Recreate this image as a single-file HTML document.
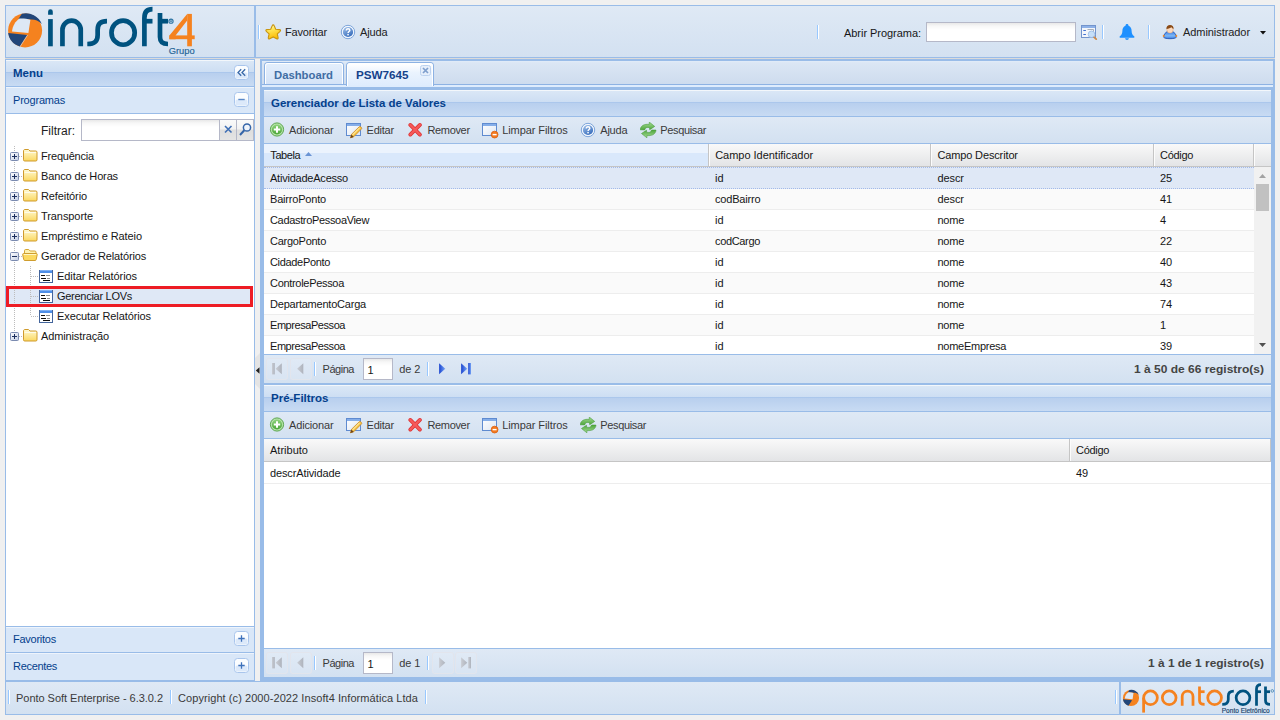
<!DOCTYPE html>
<html><head><meta charset="utf-8"><title>Ponto Soft Enterprise</title>
<style>
html,body{margin:0;padding:0}
body{width:1280px;height:720px;overflow:hidden;background:#f0f0f0;position:relative;font-family:"Liberation Sans",sans-serif;font-size:11px;line-height:11px;color:#161616}
div,span,svg{position:absolute;box-sizing:border-box}
.t{white-space:pre;font-size:11px;line-height:11px}
.h{white-space:pre;font-weight:bold;color:#04408c}
.a{white-space:pre;color:#04408c}
.g{white-space:pre;color:#3a3a3a}

</style></head>
<body>
<div style="left:5px;top:58px;width:1270px;height:1px;background:#dadada"></div>
<div style="left:5px;top:5px;width:250px;height:53px;border:1px solid #99bce8;background:linear-gradient(#dfe9f5,#d3e1f1)"></div>
<div style="left:255px;top:5px;width:1020px;height:53px;border:1px solid #99bce8;background:linear-gradient(#dfe9f5,#d3e1f1)"></div>
<svg style="left:5px;top:5px" width="250" height="53" viewBox="0 0 250 53">
<circle cx="20.100" cy="25.400" r="17" fill="#f5821f"/>
<path d="M13.300 14.600C14.500 12.300 15.600 10.500 16.900 8.700A17.200 17.200 0 0 1 36.900 19C33.500 15.600 29.500 14.300 25.400 14.600 21 13.600 16.500 13.900 13.300 14.600z" fill="#21467a"/>
<path d="M7 26.600C7.600 21 10.300 16.300 14.600 13.600 18 13.300 22 13.800 25.400 14.800L23.400 28.100z" fill="#dde8f5"/>
<path d="M3.200 28.100L22.300 30.100 14.800 41.500C8.500 39.800 4 34.800 3.200 28.100z" fill="#21467a"/>
<path d="M22.600 30L15.100 41.600" stroke="#dde8f5" stroke-width=".6" fill="none"/>
<g fill="none" stroke="#00527f" stroke-width="4.700">
<path d="M45.450 14.100V41.300"/>
<path d="M57.450 41.300V24.800a9.150 9.150 0 0 1 18.300 0V41.300"/>
<path d="M82.300 39C90 39 92.650 36 92.650 30V25C92.650 19 95.500 16.200 102 16.200"/>
<ellipse cx="118.100" cy="27.650" rx="11.600" ry="12.100"/>
<path d="M139.400 41.300V13C139.400 7 142 4.200 147.500 4.200"/>
<path d="M139.400 16.200H147.500"/>
<path d="M155 8V32C155 37 157.500 39 163 39"/>
<path d="M155 16.200H163"/>
</g>
<path d="M43.100 9.800V6.650a2.350 2.350 0 0 1 4.700 0V9.800z" fill="#00527f"/>
<circle cx="166" cy="16.200" r="2.100" fill="#cfe0ef" stroke="#2e74a3" stroke-width="1.100"/><rect x="165.300" y="15.300" width="1.400" height="1.800" fill="#2e74a3"/>
<path d="M182.200 8.900H186.900V41.300H182.200z" fill="#f5821f"/>
<path d="M182.200 8.900V15.600L170.600 30.400V34.200H164.400V30.600z" fill="#f5821f"/>
<path d="M164.400 30.400H189.700V34.200H164.400z" fill="#f5821f"/>
<text x="163.700" y="48.900" font-family="Liberation Sans" font-size="9.300" fill="#1f6496" stroke="#1f6496" stroke-width=".15" textLength="26" lengthAdjust="spacingAndGlyphs">Grupo</text>
</svg>
<div style="left:258px;top:25px;width:1px;height:14px;background:#98c8ff"></div>
<div style="left:259px;top:25px;width:1px;height:14px;background:#fff"></div>
<svg style="left:265px;top:24px" width="17" height="17" viewBox="0 0 17 17"><defs><linearGradient id="sg2" x1="0" y1="0" x2=".3" y2="1"><stop offset="0" stop-color="#fffde0"/><stop offset=".4" stop-color="#ffe85a"/><stop offset="1" stop-color="#fbbd08"/></linearGradient></defs><path d="M8.200 .9c.5 0 .8.300 1 .8l1.500 3.500 3.800.4c1.100.1 1.400 1 .6 1.700l-2.800 2.600.8 3.800c.2 1-.5 1.600-1.400 1.100L8.200 12.900l-3.500 1.900c-.9.500-1.600-.1-1.400-1.100l.8-3.800L1.300 7.300C.5 6.600.8 5.700 1.900 5.600l3.800-.4L7.200 1.700c.2-.5.500-.8 1-.8z" fill="url(#sg2)" stroke="#c9950f" stroke-width="1.100" stroke-linejoin="round"/></svg>
<span class="g" style="left:285px;top:27px;letter-spacing:-0.156px;color:#222">Favoritar</span>
<svg style="left:340px;top:24px" width="16" height="16" viewBox="0 0 16 16"><defs><linearGradient id="hg3" x1="0" y1="0" x2=".6" y2="1"><stop offset="0" stop-color="#a5c5ec"/><stop offset="1" stop-color="#3a6fbd"/></linearGradient></defs><circle cx="8" cy="8" r="6.700" fill="#f4f8fd" stroke="#5f90d2" stroke-width=".8"/><circle cx="8" cy="8" r="5.100" fill="url(#hg3)"/><path d="M6.300 6.500c0-1.100.7-1.800 1.800-1.800 1 0 1.700.6 1.700 1.500 0 1.300-1.700 1.300-1.700 2.700" fill="none" stroke="#fff" stroke-width="1.500"/><rect x="7.300" y="9.900" width="1.500" height="1.500" fill="#fff"/></svg>
<span class="g" style="left:360px;top:27px;letter-spacing:-0.128px;color:#222">Ajuda</span>
<div style="left:817px;top:25px;width:1px;height:14px;background:#98c8ff"></div>
<div style="left:818px;top:25px;width:1px;height:14px;background:#fff"></div>
<span class="t" style="left:844px;top:28px;letter-spacing:-0.043px">Abrir Programa:</span>
<div style="left:926px;top:22px;width:150px;height:20px;border:1px solid #b5b8c8;background:#fff linear-gradient(#e8e8e8 0,#f7f7f7 3px,#fff 7px)"></div>
<svg style="left:1081px;top:24px" width="17" height="17" viewBox="0 0 17 17"><rect x=".500" y="1.500" width="14" height="12" fill="#f3f6fb" stroke="#7394cc"/><rect x="1" y="2" width="13" height="2" fill="#8db1e8"/><path d="M2.300 6.500h2.600M2.300 10.500h2.600" stroke="#3f6fd0" stroke-width="1.200"/><path d="M6.500 5.500h6v6" fill="none" stroke="#a9afb8" stroke-width="1"/><circle cx="10.500" cy="10.300" r="3.300" fill="#c6dff8" stroke="#9dbde6" stroke-width=".9"/><path d="M13.300 13.300l1.900 1.800" stroke="#cf8a45" stroke-width="1.800" stroke-linecap="round"/></svg>
<div style="left:1102px;top:25px;width:1px;height:14px;background:#98c8ff"></div>
<div style="left:1103px;top:25px;width:1px;height:14px;background:#fff"></div>
<svg style="left:1119px;top:24px" width="16" height="16" viewBox="0 0 16 16"><path d="M8 0c.9 0 1.500.6 1.500 1.500v.3c2.100.8 3.100 2.700 3.100 5 0 2.800.9 4.200 2.300 5.300.5.400.6.700.5 1.100-.1.400-.4.600-1 .6H1.600c-.6 0-.9-.2-1-.6-.1-.4 0-.7.500-1.100C2.500 11 3.400 9.600 3.400 6.800c0-2.300 1-4.200 3.100-5v-.3C6.500.6 7.100 0 8 0z" fill="#1e90ff"/><path d="M6.100 14.300h3.800c-.1 1-.9 1.700-1.900 1.700s-1.800-.7-1.900-1.700z" fill="#1e90ff"/></svg>
<div style="left:1148px;top:25px;width:1px;height:14px;background:#98c8ff"></div>
<div style="left:1149px;top:25px;width:1px;height:14px;background:#fff"></div>
<svg style="left:1162px;top:24px" width="16" height="16" viewBox="0 0 16 16"><defs><linearGradient id="ug6" x1="0" y1="0" x2="0" y2="1"><stop offset="0" stop-color="#3f7fe0"/><stop offset=".6" stop-color="#7db8f8"/><stop offset="1" stop-color="#3b7bdc"/></linearGradient></defs><path d="M1.600 13.200C2 9.800 4 8 5.600 7.600h4.800c1.600.4 3.600 2.200 4 5.600-.9 1-3.200 1.500-6.400 1.500s-5.500-.5-6.400-1.500z" fill="url(#ug6)" stroke="#1f4fb0" stroke-width=".8"/><rect x=".800" y="10.700" width="1.700" height="2.300" rx=".8" fill="#ef8a2a"/><rect x="13.500" y="10.700" width="1.700" height="2.300" rx=".8" fill="#ef8a2a"/><ellipse cx="8" cy="5.400" rx="3.200" ry="3.700" fill="#fbd9bd" stroke="#d8a078" stroke-width=".5"/><path d="M4.400 4.900C4.300 2.300 5.900.9 8 .9s3.800 1.300 3.600 4c-1-.3-1.700-.9-2.100-1.700-1.100.9-2.900 1.500-5.100 1.700z" fill="#8a4a17"/></svg>
<span class="g" style="left:1183px;top:27px;letter-spacing:-0.066px;color:#222">Administrador</span>
<svg style="left:1260px;top:31px" width="6" height="4" viewBox="0 0 6 4"><path d="M0 0h6L3 3.500z" fill="#111"/></svg>
<div style="left:5px;top:59px;width:250px;height:622px;border:1px solid #99bce8;background:#fff"></div>
<div style="left:6px;top:60px;width:248px;height:26px;background:linear-gradient(#f3f7fb 0,#f3f7fb 1px,#dae7f6 1px,#cddef3 12px,#abc7ec 12px,#abc7ec 13px,#b8cfee 13px,#c8dbf3 100%)"></div>
<div style="left:6px;top:86px;width:248px;height:1px;background:#99bce8"></div>
<span class="h" style="left:13px;top:68px;transform:scaleX(1.044);transform-origin:0 0;font-weight:bold">Menu</span>
<svg style="left:234px;top:65px" width="15" height="15" viewBox="0 0 15 15"><rect x=".500" y=".500" width="14" height="14" rx="3" fill="#fbfdff" stroke="#a9c5ec"/><rect x="1.500" y="7.500" width="12" height="6" rx="1.500" fill="#dce9fa"/><path d="M7.200 4.200L4 7.500 7.200 10.800M11.200 4.200L8 7.500l3.200 3.300" fill="none" stroke="#3a69a8" stroke-width="1.300"/></svg>
<div style="left:6px;top:87px;width:248px;height:26px;background:#d9e7f8;border-top:1px solid #eef4fc"></div>
<div style="left:6px;top:113px;width:248px;height:1px;background:#99bce8"></div>
<span class="a" style="left:13px;top:95px;letter-spacing:-0.2px">Programas</span>
<svg style="left:234px;top:92px" width="15" height="15" viewBox="0 0 15 15"><rect x=".500" y=".500" width="14" height="14" rx="3" fill="#fbfdff" stroke="#a9c5ec"/><rect x="1.500" y="7.500" width="12" height="6" rx="1.500" fill="#dce9fa"/><path d="M4.300 7.500h6.400" stroke="#5a88c8" stroke-width="1.400"/></svg>
<span class="t" style="left:41px;top:125px;color:#222;font-size:12px;line-height:12px">Filtrar:</span>
<div style="left:81px;top:119px;width:139px;height:22px;border:1px solid #b5b8c8;background:#fff linear-gradient(#e8e8e8 0,#f7f7f7 3px,#fff 7px)"></div>
<div style="left:220px;top:119px;width:17px;height:22px;border:1px solid #b5b8c8;border-left:0;background:linear-gradient(#fafafa 0,#f2f2f2 45%,#dedede 50%,#e4e4e4)"></div>
<div style="left:237px;top:119px;width:17px;height:22px;border:1px solid #b5b8c8;border-left:0;background:linear-gradient(#fafafa 0,#f2f2f2 45%,#dedede 50%,#e4e4e4)"></div>
<svg style="left:224px;top:125px" width="9" height="9" viewBox="0 0 9 9"><path d="M1 1l6.500 6.500M7.500 1L1 7.500" stroke="#3f6fb5" stroke-width="1.600"/></svg>
<svg style="left:238px;top:122px" width="15" height="15" viewBox="0 0 15 15"><circle cx="9" cy="5.500" r="3.600" fill="#eef4fc" stroke="#3565a8" stroke-width="1.500"/><path d="M6.300 8.300L2 13" stroke="#3565a8" stroke-width="2"/></svg>
<div style="left:6px;top:286px;width:247px;height:21px;background:#dfe8f6"></div>
<div style="left:14px;top:146px;width:1px;height:190px;background:repeating-linear-gradient(#bcbcbc 0 1px,transparent 1px 2px)"></div>
<div style="left:30px;top:266px;width:1px;height:50px;background:repeating-linear-gradient(#bcbcbc 0 1px,transparent 1px 2px)"></div>
<svg style="left:10px;top:152px" width="9" height="9" viewBox="0 0 9 9"><defs><linearGradient id="pg12" x1="0" y1="0" x2="1" y2="1"><stop offset="0" stop-color="#fff"/><stop offset="1" stop-color="#c3cde2"/></linearGradient></defs><rect x=".500" y=".500" width="8" height="8" rx="1" fill="url(#pg12)" stroke="#7b8bb0"/><path d="M2 4.500h5" stroke="#1c2f5c" stroke-width="1"/><path d="M4.500 2v5" stroke="#1c2f5c" stroke-width="1"/></svg>
<div style="left:19px;top:156px;width:3px;height:1px;background:repeating-linear-gradient(90deg,#bcbcbc 0 1px,transparent 1px 2px)"></div>
<svg style="left:22px;top:147px" width="16" height="16" viewBox="0 0 16 16"><defs><linearGradient id="fg13" x1="0" y1="0" x2="0" y2="1"><stop offset="0" stop-color="#fffbd6"/><stop offset="1" stop-color="#fbd860"/></linearGradient></defs><path d="M1.500 4c0-1 .5-1.500 1.500-1.500h3.500l1.500 1.500h5.800c.8 0 1.200.4 1.200 1.200v7.600c0 .8-.4 1.200-1.200 1.200H2.700c-.8 0-1.200-.4-1.200-1.200z" fill="url(#fg13)" stroke="#cf9a2c" stroke-width="1"/><path d="M2.500 5.500h11.500" stroke="#fff" stroke-width="1" opacity=".7"/></svg>
<span class="t" style="left:41px;top:151px;letter-spacing:-0.205px">Frequência</span>
<svg style="left:10px;top:172px" width="9" height="9" viewBox="0 0 9 9"><defs><linearGradient id="pg14" x1="0" y1="0" x2="1" y2="1"><stop offset="0" stop-color="#fff"/><stop offset="1" stop-color="#c3cde2"/></linearGradient></defs><rect x=".500" y=".500" width="8" height="8" rx="1" fill="url(#pg14)" stroke="#7b8bb0"/><path d="M2 4.500h5" stroke="#1c2f5c" stroke-width="1"/><path d="M4.500 2v5" stroke="#1c2f5c" stroke-width="1"/></svg>
<div style="left:19px;top:176px;width:3px;height:1px;background:repeating-linear-gradient(90deg,#bcbcbc 0 1px,transparent 1px 2px)"></div>
<svg style="left:22px;top:167px" width="16" height="16" viewBox="0 0 16 16"><defs><linearGradient id="fg15" x1="0" y1="0" x2="0" y2="1"><stop offset="0" stop-color="#fffbd6"/><stop offset="1" stop-color="#fbd860"/></linearGradient></defs><path d="M1.500 4c0-1 .5-1.500 1.500-1.500h3.500l1.500 1.500h5.800c.8 0 1.200.4 1.200 1.200v7.600c0 .8-.4 1.200-1.200 1.200H2.700c-.8 0-1.200-.4-1.200-1.200z" fill="url(#fg15)" stroke="#cf9a2c" stroke-width="1"/><path d="M2.500 5.500h11.500" stroke="#fff" stroke-width="1" opacity=".7"/></svg>
<span class="t" style="left:41px;top:171px;letter-spacing:-0.135px">Banco de Horas</span>
<svg style="left:10px;top:192px" width="9" height="9" viewBox="0 0 9 9"><defs><linearGradient id="pg16" x1="0" y1="0" x2="1" y2="1"><stop offset="0" stop-color="#fff"/><stop offset="1" stop-color="#c3cde2"/></linearGradient></defs><rect x=".500" y=".500" width="8" height="8" rx="1" fill="url(#pg16)" stroke="#7b8bb0"/><path d="M2 4.500h5" stroke="#1c2f5c" stroke-width="1"/><path d="M4.500 2v5" stroke="#1c2f5c" stroke-width="1"/></svg>
<div style="left:19px;top:196px;width:3px;height:1px;background:repeating-linear-gradient(90deg,#bcbcbc 0 1px,transparent 1px 2px)"></div>
<svg style="left:22px;top:187px" width="16" height="16" viewBox="0 0 16 16"><defs><linearGradient id="fg17" x1="0" y1="0" x2="0" y2="1"><stop offset="0" stop-color="#fffbd6"/><stop offset="1" stop-color="#fbd860"/></linearGradient></defs><path d="M1.500 4c0-1 .5-1.500 1.500-1.500h3.500l1.500 1.500h5.800c.8 0 1.200.4 1.200 1.200v7.600c0 .8-.4 1.200-1.200 1.200H2.700c-.8 0-1.200-.4-1.200-1.200z" fill="url(#fg17)" stroke="#cf9a2c" stroke-width="1"/><path d="M2.500 5.500h11.500" stroke="#fff" stroke-width="1" opacity=".7"/></svg>
<span class="t" style="left:41px;top:191px;letter-spacing:-0.108px">Refeitório</span>
<svg style="left:10px;top:212px" width="9" height="9" viewBox="0 0 9 9"><defs><linearGradient id="pg18" x1="0" y1="0" x2="1" y2="1"><stop offset="0" stop-color="#fff"/><stop offset="1" stop-color="#c3cde2"/></linearGradient></defs><rect x=".500" y=".500" width="8" height="8" rx="1" fill="url(#pg18)" stroke="#7b8bb0"/><path d="M2 4.500h5" stroke="#1c2f5c" stroke-width="1"/><path d="M4.500 2v5" stroke="#1c2f5c" stroke-width="1"/></svg>
<div style="left:19px;top:216px;width:3px;height:1px;background:repeating-linear-gradient(90deg,#bcbcbc 0 1px,transparent 1px 2px)"></div>
<svg style="left:22px;top:207px" width="16" height="16" viewBox="0 0 16 16"><defs><linearGradient id="fg19" x1="0" y1="0" x2="0" y2="1"><stop offset="0" stop-color="#fffbd6"/><stop offset="1" stop-color="#fbd860"/></linearGradient></defs><path d="M1.500 4c0-1 .5-1.500 1.500-1.500h3.500l1.500 1.500h5.800c.8 0 1.200.4 1.200 1.200v7.600c0 .8-.4 1.200-1.200 1.200H2.700c-.8 0-1.200-.4-1.200-1.200z" fill="url(#fg19)" stroke="#cf9a2c" stroke-width="1"/><path d="M2.500 5.500h11.500" stroke="#fff" stroke-width="1" opacity=".7"/></svg>
<span class="t" style="left:41px;top:211px;letter-spacing:-0.08px">Transporte</span>
<svg style="left:10px;top:232px" width="9" height="9" viewBox="0 0 9 9"><defs><linearGradient id="pg20" x1="0" y1="0" x2="1" y2="1"><stop offset="0" stop-color="#fff"/><stop offset="1" stop-color="#c3cde2"/></linearGradient></defs><rect x=".500" y=".500" width="8" height="8" rx="1" fill="url(#pg20)" stroke="#7b8bb0"/><path d="M2 4.500h5" stroke="#1c2f5c" stroke-width="1"/><path d="M4.500 2v5" stroke="#1c2f5c" stroke-width="1"/></svg>
<div style="left:19px;top:236px;width:3px;height:1px;background:repeating-linear-gradient(90deg,#bcbcbc 0 1px,transparent 1px 2px)"></div>
<svg style="left:22px;top:227px" width="16" height="16" viewBox="0 0 16 16"><defs><linearGradient id="fg21" x1="0" y1="0" x2="0" y2="1"><stop offset="0" stop-color="#fffbd6"/><stop offset="1" stop-color="#fbd860"/></linearGradient></defs><path d="M1.500 4c0-1 .5-1.500 1.500-1.500h3.500l1.500 1.500h5.800c.8 0 1.200.4 1.200 1.200v7.600c0 .8-.4 1.200-1.200 1.200H2.700c-.8 0-1.200-.4-1.200-1.200z" fill="url(#fg21)" stroke="#cf9a2c" stroke-width="1"/><path d="M2.500 5.500h11.500" stroke="#fff" stroke-width="1" opacity=".7"/></svg>
<span class="t" style="left:41px;top:231px;letter-spacing:-0.09px">Empréstimo e Rateio</span>
<svg style="left:10px;top:252px" width="9" height="9" viewBox="0 0 9 9"><defs><linearGradient id="pg22" x1="0" y1="0" x2="1" y2="1"><stop offset="0" stop-color="#fff"/><stop offset="1" stop-color="#c3cde2"/></linearGradient></defs><rect x=".500" y=".500" width="8" height="8" rx="1" fill="url(#pg22)" stroke="#7b8bb0"/><path d="M2 4.500h5" stroke="#1c2f5c" stroke-width="1"/></svg>
<div style="left:19px;top:256px;width:3px;height:1px;background:repeating-linear-gradient(90deg,#bcbcbc 0 1px,transparent 1px 2px)"></div>
<svg style="left:22px;top:248px" width="16" height="16" viewBox="0 0 16 16"><path d="M2.500 11V2.700c0-.8.400-1.200 1.200-1.200h3L8.200 3h4.600c.8 0 1.200.4 1.200 1.200V6" fill="#fdf2b0" stroke="#d6a432"/><path d="M.700 6.700c-.2-.8.200-1.200.9-1.200h12.700c.7 0 1.100.4.900 1.200l-1 4.800c-.1.700-.5 1-1.200 1H2.900c-.7 0-1.100-.3-1.200-1z" fill="#fbd960" stroke="#cf9d2e"/><path d="M1.800 6.500h12.400" stroke="#fff6c4" stroke-width="1"/></svg>
<span class="t" style="left:41px;top:251px;letter-spacing:-0.154px">Gerador de Relatórios</span>
<div style="left:31px;top:276px;width:7px;height:1px;background:repeating-linear-gradient(90deg,#bcbcbc 0 1px,transparent 1px 2px)"></div>
<svg style="left:38px;top:268px" width="16" height="16" viewBox="0 0 16 16"><rect x="1.500" y="2.500" width="13" height="12" fill="#fff" stroke="#44659c"/><rect x="2" y="3" width="12" height="2" fill="#4f8fe8"/><rect x="2" y="2" width="12" height="1" fill="#7fb0f2"/><path d="M3 7.500h4M3 10.500h5M5 12.500h7" stroke="#111" stroke-width="1"/><path d="M8 7.500h4M9 10.500h3" stroke="#8a8a8a" stroke-width="1"/></svg>
<span class="t" style="left:57px;top:271px;letter-spacing:-0.078px">Editar Relatórios</span>
<div style="left:6px;top:286px;width:247px;height:21px;border:3px solid #ed1c24"></div>
<div style="left:31px;top:296px;width:7px;height:1px;background:repeating-linear-gradient(90deg,#bcbcbc 0 1px,transparent 1px 2px)"></div>
<svg style="left:38px;top:288px" width="16" height="16" viewBox="0 0 16 16"><rect x="1.500" y="2.500" width="13" height="12" fill="#fff" stroke="#44659c"/><rect x="2" y="3" width="12" height="2" fill="#4f8fe8"/><rect x="2" y="2" width="12" height="1" fill="#7fb0f2"/><path d="M3 7.500h4M3 10.500h5M5 12.500h7" stroke="#111" stroke-width="1"/><path d="M8 7.500h4M9 10.500h3" stroke="#8a8a8a" stroke-width="1"/></svg>
<span class="t" style="left:57px;top:291px;letter-spacing:-0.277px">Gerenciar LOVs</span>
<div style="left:31px;top:316px;width:7px;height:1px;background:repeating-linear-gradient(90deg,#bcbcbc 0 1px,transparent 1px 2px)"></div>
<svg style="left:38px;top:308px" width="16" height="16" viewBox="0 0 16 16"><rect x="1.500" y="2.500" width="13" height="12" fill="#fff" stroke="#44659c"/><rect x="2" y="3" width="12" height="2" fill="#4f8fe8"/><rect x="2" y="2" width="12" height="1" fill="#7fb0f2"/><path d="M3 7.500h4M3 10.500h5M5 12.500h7" stroke="#111" stroke-width="1"/><path d="M8 7.500h4M9 10.500h3" stroke="#8a8a8a" stroke-width="1"/></svg>
<span class="t" style="left:57px;top:311px;letter-spacing:-0.105px">Executar Relatórios</span>
<svg style="left:10px;top:332px" width="9" height="9" viewBox="0 0 9 9"><defs><linearGradient id="pg27" x1="0" y1="0" x2="1" y2="1"><stop offset="0" stop-color="#fff"/><stop offset="1" stop-color="#c3cde2"/></linearGradient></defs><rect x=".500" y=".500" width="8" height="8" rx="1" fill="url(#pg27)" stroke="#7b8bb0"/><path d="M2 4.500h5" stroke="#1c2f5c" stroke-width="1"/><path d="M4.500 2v5" stroke="#1c2f5c" stroke-width="1"/></svg>
<div style="left:19px;top:336px;width:3px;height:1px;background:repeating-linear-gradient(90deg,#bcbcbc 0 1px,transparent 1px 2px)"></div>
<svg style="left:22px;top:327px" width="16" height="16" viewBox="0 0 16 16"><defs><linearGradient id="fg28" x1="0" y1="0" x2="0" y2="1"><stop offset="0" stop-color="#fffbd6"/><stop offset="1" stop-color="#fbd860"/></linearGradient></defs><path d="M1.500 4c0-1 .5-1.500 1.500-1.500h3.500l1.500 1.500h5.800c.8 0 1.200.4 1.200 1.200v7.600c0 .8-.4 1.200-1.200 1.200H2.700c-.8 0-1.200-.4-1.200-1.200z" fill="url(#fg28)" stroke="#cf9a2c" stroke-width="1"/><path d="M2.500 5.500h11.500" stroke="#fff" stroke-width="1" opacity=".7"/></svg>
<span class="t" style="left:41px;top:331px;letter-spacing:-0.131px">Administração</span>
<div style="left:6px;top:626px;width:248px;height:1px;background:#99bce8"></div>
<div style="left:6px;top:627px;width:248px;height:25px;background:#d9e7f8;border-top:1px solid #eef4fc"></div>
<span class="a" style="left:13px;top:634px;letter-spacing:-0.25px">Favoritos</span>
<svg style="left:234px;top:631px" width="15" height="15" viewBox="0 0 15 15"><rect x=".500" y=".500" width="14" height="14" rx="3" fill="#fbfdff" stroke="#a9c5ec"/><rect x="1.500" y="7.500" width="12" height="6" rx="1.500" fill="#dce9fa"/><path d="M4.300 7.500h6.400M7.500 4.300v6.400" stroke="#3f72bb" stroke-width="1.300"/></svg>
<div style="left:6px;top:652px;width:248px;height:1px;background:#99bce8"></div>
<div style="left:6px;top:653px;width:248px;height:27px;background:#d9e7f8;border-top:1px solid #eef4fc"></div>
<span class="a" style="left:13px;top:661px;letter-spacing:-0.311px">Recentes</span>
<svg style="left:234px;top:658px" width="15" height="15" viewBox="0 0 15 15"><rect x=".500" y=".500" width="14" height="14" rx="3" fill="#fbfdff" stroke="#a9c5ec"/><rect x="1.500" y="7.500" width="12" height="6" rx="1.500" fill="#dce9fa"/><path d="M4.300 7.500h6.400M7.500 4.300v6.400" stroke="#3f72bb" stroke-width="1.300"/></svg>
<svg style="left:255px;top:353px" width="5" height="36" viewBox="0 0 5 36"><path d="M5 0V36L0 31V5z" fill="#e4e4e4"/></svg>
<svg style="left:255px;top:367px" width="5" height="7" viewBox="0 0 5 7"><path d="M4.500 .3v6.400L.8 3.500z" fill="#222"/></svg>
<div style="left:260px;top:59px;width:1015px;height:622px;background:#99bce8"></div>
<div style="left:262px;top:61px;width:1011px;height:24px;background:linear-gradient(#e2ecf8 0,#dbe6f4 2px,#cddbee 100%)"></div>
<div style="left:262px;top:84px;width:1011px;height:1px;background:#8db2e3"></div>
<div style="left:262px;top:85px;width:1011px;height:2px;background:#deecfd"></div>
<div style="left:264px;top:62px;width:80px;height:22px;border:1px solid #8db2e3;border-bottom:0;border-radius:4px 4px 0 0;background:linear-gradient(#e4effc 0,#dce9fa 50%,#d4e3f7 100%)"></div>
<div style="left:265px;top:63px;width:78px;height:21px;border:1px solid #fff;border-bottom:0;border-radius:3px 3px 0 0;"></div>
<span class="h" style="left:274px;top:70px;transform:scaleX(1.0266);transform-origin:0 0;color:#416da3;font-weight:bold">Dashboard</span>
<div style="left:346px;top:62px;width:88px;height:24px;border:1px solid #8db2e3;border-bottom:0;border-radius:4px 4px 0 0;background:#deecfd"></div>
<div style="left:347px;top:63px;width:86px;height:23px;border:1px solid #fff;border-bottom:0;border-radius:3px 3px 0 0;background:linear-gradient(#fff 0,#eaf3fe 40%,#deecfd 100%)"></div>
<span class="h" style="left:356px;top:70px;transform:scaleX(1.0599);transform-origin:0 0;color:#15428b;font-weight:bold">PSW7645</span>
<svg style="left:420px;top:65px" width="11" height="11" viewBox="0 0 11 11"><rect x=".500" y=".500" width="10" height="10" rx="2" fill="#e6effb" stroke="#bcd2ef"/><path d="M3 3l5 5M8 3L3 8" stroke="#7f9fcd" stroke-width="1.700"/></svg>
<div style="left:264px;top:90px;width:1007px;height:27px;background:linear-gradient(#f3f7fb 0,#f3f7fb 1px,#dae7f6 1px,#cddef3 12px,#abc7ec 12px,#abc7ec 13px,#b8cfee 13px,#c8dbf3 100%);border-bottom:1px solid #99bce8"></div>
<span class="h" style="left:271.3px;top:98px;transform:scaleX(1.0447);transform-origin:0 0;font-weight:bold">Gerenciador de Lista de Valores</span>
<div style="left:264px;top:117px;width:1007px;height:27px;background:linear-gradient(#dfe9f5,#d3e1f1);border-bottom:1px solid #99bce8"></div>
<svg style="left:269px;top:122px" width="16" height="16" viewBox="0 0 16 16"><defs><linearGradient id="ag34" x1="0" y1="0" x2="0" y2="1"><stop offset="0" stop-color="#8fd47e"/><stop offset="1" stop-color="#4aa538"/></linearGradient></defs><circle cx="8" cy="7.500" r="6.600" fill="#b9e3ad" stroke="#4e9f3f" stroke-width=".9"/><circle cx="8" cy="7.500" r="5.100" fill="url(#ag34)"/><path d="M8 4.300v6.400M4.800 7.500h6.400" stroke="#fff" stroke-width="2"/></svg>
<span class="g" style="left:289px;top:125px;letter-spacing:-0.151px">Adicionar</span>
<svg style="left:346px;top:122px" width="17" height="17" viewBox="0 0 17 17"><defs><linearGradient id="wg35" x1="0" y1="0" x2="1" y2="1"><stop offset="0" stop-color="#fff"/><stop offset="1" stop-color="#dde6f3"/></linearGradient></defs><rect x=".500" y="1.500" width="14" height="12" fill="url(#wg35)" stroke="#5f8bd0"/><rect x="1" y="2" width="13" height="2" fill="#85aee9"/><path d="M4.400 15.900l1.100-3.600 7.700-7.500c.5-.5 1-.5 1.500 0l.7.700c.5.500.5 1 0 1.500l-7.600 7.700z" fill="#f7c443" stroke="#c8862a" stroke-width=".8"/><path d="M6.500 12.800l7-6.900" stroke="#fde9a0" stroke-width="1.100"/><path d="M4.400 15.900l1-3.300 2.300 2.300z" fill="#6a431a"/></svg>
<span class="g" style="left:366.5px;top:125px;letter-spacing:-0.208px">Editar</span>
<svg style="left:408px;top:122px" width="16" height="16" viewBox="0 0 16 16"><path d="M2.300 2.900l9.600 9.700M11.900 2.900l-9.600 9.700" stroke="#dd2c2c" stroke-width="3.700" stroke-linecap="round"/><path d="M2.300 2.900l9.600 9.700M11.900 2.900l-9.600 9.700" stroke="#f55a5a" stroke-width="2.300" stroke-linecap="round"/></svg>
<span class="g" style="left:427.5px;top:125px;letter-spacing:-0.346px">Remover</span>
<svg style="left:482px;top:122px" width="17" height="17" viewBox="0 0 17 17"><defs><linearGradient id="wg37" x1="0" y1="0" x2="1" y2="1"><stop offset="0" stop-color="#fff"/><stop offset="1" stop-color="#dde6f3"/></linearGradient></defs><rect x=".500" y="1.500" width="14" height="12" fill="url(#wg37)" stroke="#5f8bd0"/><rect x="1" y="2" width="13" height="2" fill="#85aee9"/><circle cx="12.600" cy="12.600" r="3.400" fill="#f47a20" stroke="#d95e0c" stroke-width=".8"/><rect x="10.600" y="11.900" width="4" height="1.400" fill="#fff"/></svg>
<span class="g" style="left:502.2px;top:125px;letter-spacing:-0.073px">Limpar Filtros</span>
<svg style="left:580px;top:122px" width="16" height="16" viewBox="0 0 16 16"><defs><linearGradient id="hg38" x1="0" y1="0" x2=".6" y2="1"><stop offset="0" stop-color="#a5c5ec"/><stop offset="1" stop-color="#3a6fbd"/></linearGradient></defs><circle cx="8" cy="8" r="6.700" fill="#f4f8fd" stroke="#5f90d2" stroke-width=".8"/><circle cx="8" cy="8" r="5.100" fill="url(#hg38)"/><path d="M6.300 6.500c0-1.100.7-1.800 1.800-1.800 1 0 1.700.6 1.700 1.500 0 1.300-1.700 1.300-1.700 2.700" fill="none" stroke="#fff" stroke-width="1.500"/><rect x="7.300" y="9.900" width="1.500" height="1.500" fill="#fff"/></svg>
<span class="g" style="left:600.3px;top:125px;letter-spacing:-0.228px">Ajuda</span>
<svg style="left:640px;top:122px" width="17" height="17" viewBox="0 0 17 17"><defs><linearGradient id="rg39" x1="0" y1="0" x2="0" y2="1"><stop offset="0" stop-color="#a5dc95"/><stop offset="1" stop-color="#4ea63c"/></linearGradient></defs><path d="M.200 7.800C.500 4.400 3.300 2.300 7.200 2.300H9.300V.1L14.700 4.400 9.700 7.700 9.500 5.500H7.400C5.800 5.500 5.100 6.400 4.700 7.900z" fill="url(#rg39)" stroke="#4a9c3a" stroke-width=".6"/><path d="M.200 7.800C.500 4.400 3.300 2.300 7.200 2.300H9.300V.1L14.700 4.400 9.700 7.700 9.500 5.500H7.400C5.800 5.500 5.100 6.400 4.700 7.900z" transform="rotate(180 8.100 7.950)" fill="url(#rg39)" stroke="#4a9c3a" stroke-width=".6"/></svg>
<span class="g" style="left:660.3px;top:125px;letter-spacing:-0.358px">Pesquisar</span>
<div style="left:264px;top:144px;width:1007px;height:23px;background:linear-gradient(#f9f9f9 0,#e3e4e6 100%);border-bottom:1px solid #c5c5c5"></div>
<div style="left:264px;top:144px;width:445px;height:22px;background:linear-gradient(#ebf3fd 0,#ebf3fd 39%,#d9e8fb 40%,#d9e8fb 100%);border-right:1px solid #c5c5c5"></div>
<div style="left:930px;top:144px;width:1px;height:22px;background:#c5c5c5"></div>
<div style="left:931px;top:144px;width:1px;height:22px;background:#fcfcfc"></div>
<div style="left:1153px;top:144px;width:1px;height:22px;background:#c5c5c5"></div>
<div style="left:1154px;top:144px;width:1px;height:22px;background:#fcfcfc"></div>
<div style="left:1253px;top:144px;width:1px;height:22px;background:#c5c5c5"></div>
<div style="left:1254px;top:144px;width:1px;height:22px;background:#fcfcfc"></div>
<div style="left:709px;top:144px;width:1px;height:22px;background:#fcfcfc"></div>
<span class="t" style="left:270.3px;top:150px;letter-spacing:-0.404px">Tabela</span>
<svg style="left:305px;top:152px" width="7" height="4" viewBox="0 0 7 4"><path d="M0 4L3.500 0 7 4z" fill="#6a94d4"/></svg>
<span class="t" style="left:715.2px;top:150px;letter-spacing:-0.024px">Campo Identificador</span>
<span class="t" style="left:937.4px;top:150px;letter-spacing:-0.135px">Campo Descritor</span>
<span class="t" style="left:1160px;top:150px;letter-spacing:-0.31px">Código</span>
<div style="left:264px;top:167px;width:990px;height:187px;background:#fff"></div>
<div style="left:264px;top:167px;width:990px;height:22px;background:#dfe8f6;border-top:1px dotted #a3bae9;border-bottom:1px dotted #a3bae9"></div>
<span class="t" style="left:270px;top:173px;letter-spacing:-0.222px">AtividadeAcesso</span>
<span class="t" style="left:715px;top:173px">id</span>
<span class="t" style="left:937.4px;top:173px;letter-spacing:-0.081px">descr</span>
<span class="t" style="left:1160px;top:173px">25</span>
<div style="left:264px;top:189px;width:990px;height:21px;background:#fafafa;border-bottom:1px solid #ededed"></div>
<span class="t" style="left:270px;top:194px;letter-spacing:-0.19px">BairroPonto</span>
<span class="t" style="left:715px;top:194px;letter-spacing:-0.175px">codBairro</span>
<span class="t" style="left:937.4px;top:194px;letter-spacing:-0.081px">descr</span>
<span class="t" style="left:1160px;top:194px">41</span>
<div style="left:264px;top:210px;width:990px;height:21px;background:#fff;border-bottom:1px solid #ededed"></div>
<span class="t" style="left:270px;top:215px;letter-spacing:-0.332px">CadastroPessoaView</span>
<span class="t" style="left:715px;top:215px">id</span>
<span class="t" style="left:937.4px;top:215px;letter-spacing:-0.183px">nome</span>
<span class="t" style="left:1160px;top:215px">4</span>
<div style="left:264px;top:231px;width:990px;height:21px;background:#fafafa;border-bottom:1px solid #ededed"></div>
<span class="t" style="left:270px;top:236px;letter-spacing:-0.272px">CargoPonto</span>
<span class="t" style="left:715px;top:236px;letter-spacing:-0.338px">codCargo</span>
<span class="t" style="left:937.4px;top:236px;letter-spacing:-0.183px">nome</span>
<span class="t" style="left:1160px;top:236px">22</span>
<div style="left:264px;top:252px;width:990px;height:21px;background:#fff;border-bottom:1px solid #ededed"></div>
<span class="t" style="left:270px;top:257px;letter-spacing:-0.328px">CidadePonto</span>
<span class="t" style="left:715px;top:257px">id</span>
<span class="t" style="left:937.4px;top:257px;letter-spacing:-0.183px">nome</span>
<span class="t" style="left:1160px;top:257px">40</span>
<div style="left:264px;top:273px;width:990px;height:21px;background:#fafafa;border-bottom:1px solid #ededed"></div>
<span class="t" style="left:270px;top:278px;letter-spacing:-0.306px">ControlePessoa</span>
<span class="t" style="left:715px;top:278px">id</span>
<span class="t" style="left:937.4px;top:278px;letter-spacing:-0.183px">nome</span>
<span class="t" style="left:1160px;top:278px">43</span>
<div style="left:264px;top:294px;width:990px;height:21px;background:#fff;border-bottom:1px solid #ededed"></div>
<span class="t" style="left:270px;top:299px;letter-spacing:-0.216px">DepartamentoCarga</span>
<span class="t" style="left:715px;top:299px">id</span>
<span class="t" style="left:937.4px;top:299px;letter-spacing:-0.183px">nome</span>
<span class="t" style="left:1160px;top:299px">74</span>
<div style="left:264px;top:315px;width:990px;height:21px;background:#fafafa;border-bottom:1px solid #ededed"></div>
<span class="t" style="left:270px;top:320px;letter-spacing:-0.44px">EmpresaPessoa</span>
<span class="t" style="left:715px;top:320px">id</span>
<span class="t" style="left:937.4px;top:320px;letter-spacing:-0.183px">nome</span>
<span class="t" style="left:1160px;top:320px">1</span>
<div style="left:264px;top:336px;width:990px;height:21px;background:#fff;border-bottom:1px solid #ededed"></div>
<span class="t" style="left:270px;top:341px;letter-spacing:-0.44px">EmpresaPessoa</span>
<span class="t" style="left:715px;top:341px">id</span>
<span class="t" style="left:937.4px;top:341px;letter-spacing:-0.25px">nomeEmpresa</span>
<span class="t" style="left:1160px;top:341px">39</span>
<div style="left:1254px;top:167px;width:17px;height:187px;background:#f1f1f1"></div>
<svg style="left:1259px;top:174px" width="7" height="4" viewBox="0 0 7 4"><path d="M0 4L3.500 0 7 4z" fill="#a3a3a3"/></svg>
<svg style="left:1259px;top:343px" width="7" height="4" viewBox="0 0 7 4"><path d="M0 0L3.500 4 7 0z" fill="#505050"/></svg>
<div style="left:1256px;top:184px;width:13px;height:27px;background:#c1c1c1"></div>
<div style="left:264px;top:354px;width:1007px;height:29px;border-top:1px solid #99bce8;background:linear-gradient(#dfe9f5,#d3e1f1)"></div>
<div style="left:266px;top:358px;width:22px;height:22px;border:1px solid rgba(226,228,236,.9);border-radius:3px;background:rgba(255,255,255,.1)"></div>
<div style="left:290px;top:358px;width:22px;height:22px;border:1px solid rgba(226,228,236,.9);border-radius:3px;background:rgba(255,255,255,.1)"></div>
<svg style="left:272px;top:363px" width="10" height="12" viewBox="0 0 10 12"><defs><linearGradient id="pgb43" x1="0" y1="0" x2="1" y2="0"><stop offset="0" stop-color="#1a44cf"/><stop offset="1" stop-color="#77a5f6"/></linearGradient><linearGradient id="pgg43" x1="0" y1="0" x2="1" y2="0"><stop offset="0" stop-color="#c9ccd3"/><stop offset="1" stop-color="#aeb3bd"/></linearGradient></defs><rect x="0" y="0" width="2.800" height="11.400" fill="url(#pgg43)"/><path d="M9.800 .2v11L3.600 5.700z" fill="url(#pgg43)"/></svg>
<svg style="left:297px;top:363px" width="7" height="12" viewBox="0 0 7 12"><defs><linearGradient id="pgb44" x1="0" y1="0" x2="1" y2="0"><stop offset="0" stop-color="#1a44cf"/><stop offset="1" stop-color="#77a5f6"/></linearGradient><linearGradient id="pgg44" x1="0" y1="0" x2="1" y2="0"><stop offset="0" stop-color="#c9ccd3"/><stop offset="1" stop-color="#aeb3bd"/></linearGradient></defs><path d="M6.300 .2v11L.1 5.700z" fill="url(#pgg44)"/></svg>
<div style="left:314px;top:362px;width:1px;height:14px;background:#98c8ff"></div>
<div style="left:315px;top:362px;width:1px;height:14px;background:#fff"></div>
<span class="g" style="left:322.5px;top:364px;letter-spacing:-0.461px">Página</span>
<div style="left:363px;top:358px;width:30px;height:22px;border:1px solid #b5b8c8;background:#fff linear-gradient(#e8e8e8 0,#f7f7f7 3px,#fff 7px)"></div>
<span class="t" style="left:367.5px;top:365px">1</span>
<span class="g" style="left:399.3px;top:364px;letter-spacing:-0.105px">de 2</span>
<div style="left:427px;top:362px;width:1px;height:14px;background:#98c8ff"></div>
<div style="left:428px;top:362px;width:1px;height:14px;background:#fff"></div>
<svg style="left:439px;top:363px" width="7" height="12" viewBox="0 0 7 12"><defs><linearGradient id="pgb45" x1="0" y1="0" x2="1" y2="0"><stop offset="0" stop-color="#1a44cf"/><stop offset="1" stop-color="#77a5f6"/></linearGradient><linearGradient id="pgg45" x1="0" y1="0" x2="1" y2="0"><stop offset="0" stop-color="#c9ccd3"/><stop offset="1" stop-color="#aeb3bd"/></linearGradient></defs><path d="M.1 .2v11L6.300 5.700z" fill="url(#pgb45)"/></svg>
<svg style="left:461px;top:363px" width="10" height="12" viewBox="0 0 10 12"><defs><linearGradient id="pgb46" x1="0" y1="0" x2="1" y2="0"><stop offset="0" stop-color="#1a44cf"/><stop offset="1" stop-color="#77a5f6"/></linearGradient><linearGradient id="pgg46" x1="0" y1="0" x2="1" y2="0"><stop offset="0" stop-color="#c9ccd3"/><stop offset="1" stop-color="#aeb3bd"/></linearGradient></defs><path d="M.1 .2v11L6.300 5.700z" fill="url(#pgb46)"/><rect x="7.200" y="0" width="2.800" height="11.400" fill="url(#pgb46)"/></svg>
<span class="g" style="left:1134px;top:364px;transform:scaleX(1.0903);transform-origin:0 0;color:#444;font-weight:bold">1 à 50 de 66 registro(s)</span>
<div style="left:264px;top:385px;width:1007px;height:27px;background:linear-gradient(#f3f7fb 0,#f3f7fb 1px,#dae7f6 1px,#cddef3 12px,#abc7ec 12px,#abc7ec 13px,#b8cfee 13px,#c8dbf3 100%);border-bottom:1px solid #99bce8"></div>
<span class="h" style="left:270.8px;top:393px;transform:scaleX(1.0452);transform-origin:0 0;font-weight:bold">Pré-Filtros</span>
<div style="left:264px;top:412px;width:1007px;height:27px;background:linear-gradient(#dfe9f5,#d3e1f1);border-bottom:1px solid #99bce8"></div>
<svg style="left:269px;top:417px" width="16" height="16" viewBox="0 0 16 16"><defs><linearGradient id="ag47" x1="0" y1="0" x2="0" y2="1"><stop offset="0" stop-color="#8fd47e"/><stop offset="1" stop-color="#4aa538"/></linearGradient></defs><circle cx="8" cy="7.500" r="6.600" fill="#b9e3ad" stroke="#4e9f3f" stroke-width=".9"/><circle cx="8" cy="7.500" r="5.100" fill="url(#ag47)"/><path d="M8 4.300v6.400M4.800 7.500h6.400" stroke="#fff" stroke-width="2"/></svg>
<span class="g" style="left:289px;top:420px;letter-spacing:-0.151px">Adicionar</span>
<svg style="left:346px;top:417px" width="17" height="17" viewBox="0 0 17 17"><defs><linearGradient id="wg48" x1="0" y1="0" x2="1" y2="1"><stop offset="0" stop-color="#fff"/><stop offset="1" stop-color="#dde6f3"/></linearGradient></defs><rect x=".500" y="1.500" width="14" height="12" fill="url(#wg48)" stroke="#5f8bd0"/><rect x="1" y="2" width="13" height="2" fill="#85aee9"/><path d="M4.400 15.900l1.100-3.600 7.700-7.500c.5-.5 1-.5 1.500 0l.7.700c.5.500.5 1 0 1.500l-7.600 7.700z" fill="#f7c443" stroke="#c8862a" stroke-width=".8"/><path d="M6.500 12.800l7-6.900" stroke="#fde9a0" stroke-width="1.100"/><path d="M4.400 15.900l1-3.300 2.300 2.300z" fill="#6a431a"/></svg>
<span class="g" style="left:366.5px;top:420px;letter-spacing:-0.208px">Editar</span>
<svg style="left:408px;top:417px" width="16" height="16" viewBox="0 0 16 16"><path d="M2.300 2.900l9.600 9.700M11.900 2.900l-9.600 9.700" stroke="#dd2c2c" stroke-width="3.700" stroke-linecap="round"/><path d="M2.300 2.900l9.600 9.700M11.900 2.900l-9.600 9.700" stroke="#f55a5a" stroke-width="2.300" stroke-linecap="round"/></svg>
<span class="g" style="left:427.5px;top:420px;letter-spacing:-0.346px">Remover</span>
<svg style="left:482px;top:417px" width="17" height="17" viewBox="0 0 17 17"><defs><linearGradient id="wg50" x1="0" y1="0" x2="1" y2="1"><stop offset="0" stop-color="#fff"/><stop offset="1" stop-color="#dde6f3"/></linearGradient></defs><rect x=".500" y="1.500" width="14" height="12" fill="url(#wg50)" stroke="#5f8bd0"/><rect x="1" y="2" width="13" height="2" fill="#85aee9"/><circle cx="12.600" cy="12.600" r="3.400" fill="#f47a20" stroke="#d95e0c" stroke-width=".8"/><rect x="10.600" y="11.900" width="4" height="1.400" fill="#fff"/></svg>
<span class="g" style="left:502.2px;top:420px;letter-spacing:-0.073px">Limpar Filtros</span>
<svg style="left:580px;top:417px" width="17" height="17" viewBox="0 0 17 17"><defs><linearGradient id="rg51" x1="0" y1="0" x2="0" y2="1"><stop offset="0" stop-color="#a5dc95"/><stop offset="1" stop-color="#4ea63c"/></linearGradient></defs><path d="M.200 7.800C.500 4.400 3.300 2.300 7.200 2.300H9.300V.1L14.700 4.400 9.700 7.700 9.500 5.500H7.400C5.800 5.500 5.100 6.400 4.700 7.900z" fill="url(#rg51)" stroke="#4a9c3a" stroke-width=".6"/><path d="M.200 7.800C.500 4.400 3.300 2.300 7.200 2.300H9.300V.1L14.700 4.400 9.700 7.700 9.500 5.500H7.400C5.800 5.500 5.100 6.400 4.700 7.900z" transform="rotate(180 8.100 7.950)" fill="url(#rg51)" stroke="#4a9c3a" stroke-width=".6"/></svg>
<span class="g" style="left:600.3px;top:420px;letter-spacing:-0.358px">Pesquisar</span>
<div style="left:264px;top:439px;width:1007px;height:23px;background:linear-gradient(#f9f9f9 0,#e3e4e6 100%);border-bottom:1px solid #c5c5c5"></div>
<div style="left:1069px;top:439px;width:1px;height:22px;background:#c5c5c5"></div>
<div style="left:1070px;top:439px;width:1px;height:22px;background:#fcfcfc"></div>
<span class="t" style="left:270px;top:445px;letter-spacing:0.01px">Atributo</span>
<span class="t" style="left:1076px;top:445px;letter-spacing:-0.31px">Código</span>
<div style="left:1270px;top:439px;width:1px;height:22px;background:#c5c5c5"></div>
<div style="left:264px;top:462px;width:1007px;height:186px;background:#fff"></div>
<div style="left:264px;top:462px;width:1007px;height:22px;border-bottom:1px solid #ededed"></div>
<span class="t" style="left:270px;top:468px;letter-spacing:-0.125px">descrAtividade</span>
<span class="t" style="left:1076px;top:468px">49</span>
<div style="left:264px;top:648px;width:1007px;height:29px;border-top:1px solid #99bce8;background:linear-gradient(#dfe9f5,#d3e1f1)"></div>
<div style="left:266px;top:652px;width:22px;height:22px;border:1px solid rgba(226,228,236,.9);border-radius:3px;background:rgba(255,255,255,.1)"></div>
<div style="left:290px;top:652px;width:22px;height:22px;border:1px solid rgba(226,228,236,.9);border-radius:3px;background:rgba(255,255,255,.1)"></div>
<div style="left:432px;top:652px;width:22px;height:22px;border:1px solid rgba(226,228,236,.9);border-radius:3px;background:rgba(255,255,255,.1)"></div>
<div style="left:455px;top:652px;width:22px;height:22px;border:1px solid rgba(226,228,236,.9);border-radius:3px;background:rgba(255,255,255,.1)"></div>
<svg style="left:272px;top:657px" width="10" height="12" viewBox="0 0 10 12"><defs><linearGradient id="pgb52" x1="0" y1="0" x2="1" y2="0"><stop offset="0" stop-color="#1a44cf"/><stop offset="1" stop-color="#77a5f6"/></linearGradient><linearGradient id="pgg52" x1="0" y1="0" x2="1" y2="0"><stop offset="0" stop-color="#c9ccd3"/><stop offset="1" stop-color="#aeb3bd"/></linearGradient></defs><rect x="0" y="0" width="2.800" height="11.400" fill="url(#pgg52)"/><path d="M9.800 .2v11L3.600 5.700z" fill="url(#pgg52)"/></svg>
<svg style="left:297px;top:657px" width="7" height="12" viewBox="0 0 7 12"><defs><linearGradient id="pgb53" x1="0" y1="0" x2="1" y2="0"><stop offset="0" stop-color="#1a44cf"/><stop offset="1" stop-color="#77a5f6"/></linearGradient><linearGradient id="pgg53" x1="0" y1="0" x2="1" y2="0"><stop offset="0" stop-color="#c9ccd3"/><stop offset="1" stop-color="#aeb3bd"/></linearGradient></defs><path d="M6.300 .2v11L.1 5.700z" fill="url(#pgg53)"/></svg>
<div style="left:314px;top:656px;width:1px;height:14px;background:#98c8ff"></div>
<div style="left:315px;top:656px;width:1px;height:14px;background:#fff"></div>
<span class="g" style="left:322.5px;top:658px;letter-spacing:-0.461px">Página</span>
<div style="left:363px;top:652px;width:30px;height:22px;border:1px solid #b5b8c8;background:#fff linear-gradient(#e8e8e8 0,#f7f7f7 3px,#fff 7px)"></div>
<span class="t" style="left:367.5px;top:659px">1</span>
<span class="g" style="left:399.3px;top:658px;letter-spacing:-0.105px">de 1</span>
<div style="left:427px;top:656px;width:1px;height:14px;background:#98c8ff"></div>
<div style="left:428px;top:656px;width:1px;height:14px;background:#fff"></div>
<svg style="left:439px;top:657px" width="7" height="12" viewBox="0 0 7 12"><defs><linearGradient id="pgb54" x1="0" y1="0" x2="1" y2="0"><stop offset="0" stop-color="#1a44cf"/><stop offset="1" stop-color="#77a5f6"/></linearGradient><linearGradient id="pgg54" x1="0" y1="0" x2="1" y2="0"><stop offset="0" stop-color="#c9ccd3"/><stop offset="1" stop-color="#aeb3bd"/></linearGradient></defs><path d="M.1 .2v11L6.300 5.700z" fill="url(#pgg54)"/></svg>
<svg style="left:461px;top:657px" width="10" height="12" viewBox="0 0 10 12"><defs><linearGradient id="pgb55" x1="0" y1="0" x2="1" y2="0"><stop offset="0" stop-color="#1a44cf"/><stop offset="1" stop-color="#77a5f6"/></linearGradient><linearGradient id="pgg55" x1="0" y1="0" x2="1" y2="0"><stop offset="0" stop-color="#c9ccd3"/><stop offset="1" stop-color="#aeb3bd"/></linearGradient></defs><path d="M.1 .2v11L6.300 5.700z" fill="url(#pgg55)"/><rect x="7.200" y="0" width="2.800" height="11.400" fill="url(#pgg55)"/></svg>
<span class="g" style="left:1148px;top:658px;transform:scaleX(1.0841);transform-origin:0 0;color:#444;font-weight:bold">1 à 1 de 1 registro(s)</span>
<div style="left:5px;top:681px;width:1270px;height:34px;border:1px solid #99bce8;background:linear-gradient(#dfe9f5,#d3e1f1)"></div>
<div style="left:8px;top:690px;width:1px;height:14px;background:#98c8ff"></div>
<div style="left:9px;top:690px;width:1px;height:14px;background:#fff"></div>
<span class="g" style="left:16px;top:693px;letter-spacing:-0.032px">Ponto Soft Enterprise - 6.3.0.2</span>
<div style="left:170px;top:690px;width:1px;height:14px;background:#98c8ff"></div>
<div style="left:171px;top:690px;width:1px;height:14px;background:#fff"></div>
<span class="g" style="left:178px;top:693px;letter-spacing:0.07px">Copyright (c) 2000-2022 Insoft4 Informática Ltda</span>
<div style="left:425px;top:690px;width:1px;height:14px;background:#98c8ff"></div>
<div style="left:426px;top:690px;width:1px;height:14px;background:#fff"></div>
<div style="left:1115px;top:690px;width:1px;height:14px;background:#98c8ff"></div>
<div style="left:1116px;top:690px;width:1px;height:14px;background:#fff"></div>
<div style="left:1119px;top:682px;width:2px;height:32px;background:#99bce8"></div>
<svg style="left:1120px;top:682px" width="155" height="32" viewBox="0 0 155 32">
<g transform="translate(1.430 3.900) scale(.476)">
<circle cx="20.100" cy="25.400" r="17" fill="#f5821f"/>
<path d="M13.300 14.600C14.500 12.300 15.600 10.500 16.900 8.700A17.200 17.200 0 0 1 36.900 19C33.500 15.600 29.500 14.300 25.400 14.600 21 13.600 16.500 13.900 13.300 14.600z" fill="#21467a"/>
<path d="M7 26.600C7.600 21 10.300 16.300 14.600 13.600 18 13.300 22 13.800 25.400 14.800L23.400 28.100z" fill="#dde8f5"/>
<path d="M3.200 28.100L22.300 30.100 14.800 41.500C8.500 39.800 4 34.800 3.200 28.100z" fill="#21467a"/>
</g>
<g fill="none" stroke="#f5821f" stroke-width="2.750">
<path d="M23.600 30.600V15.800"/>
<circle cx="30.500" cy="15.800" r="6.850"/>
<circle cx="49.200" cy="15.800" r="6.850"/>
<path d="M62.200 23.750V14.500a5.400 5.400 0 0 1 10.800 0V23.750"/>
<path d="M79.500 4.600V18.500C79.500 21.300 81 22.400 84.600 22.400"/>
<path d="M79.500 9.700H84.600"/>
<circle cx="94.600" cy="15.800" r="6.850"/>
</g>
<g fill="none" stroke="#00527f" stroke-width="2.750">
<path d="M102.250 22.400C106.500 22.400 108.300 20.800 108.300 17.500V14C108.300 10.700 110 9.100 113.800 9.100"/>
<circle cx="123" cy="15.800" r="6.850"/>
<path d="M136.500 23.750V7C136.500 4 138 2.700 141 2.700"/>
<path d="M136.500 9.700H141"/>
<path d="M145.500 4.600V18.500C145.500 21.300 147 22.400 150 22.400"/>
<path d="M145.500 9.700H150"/>
</g>
<circle cx="152.300" cy="8.900" r="1.300" fill="none" stroke="#2e74a3" stroke-width=".7"/>
<text x="101.750" y="30.600" font-family="Liberation Sans" font-size="6.300" fill="#17426b" stroke="#17426b" stroke-width=".15" textLength="48" lengthAdjust="spacingAndGlyphs">Ponto Eletrônico</text>
</svg>
</body></html>
